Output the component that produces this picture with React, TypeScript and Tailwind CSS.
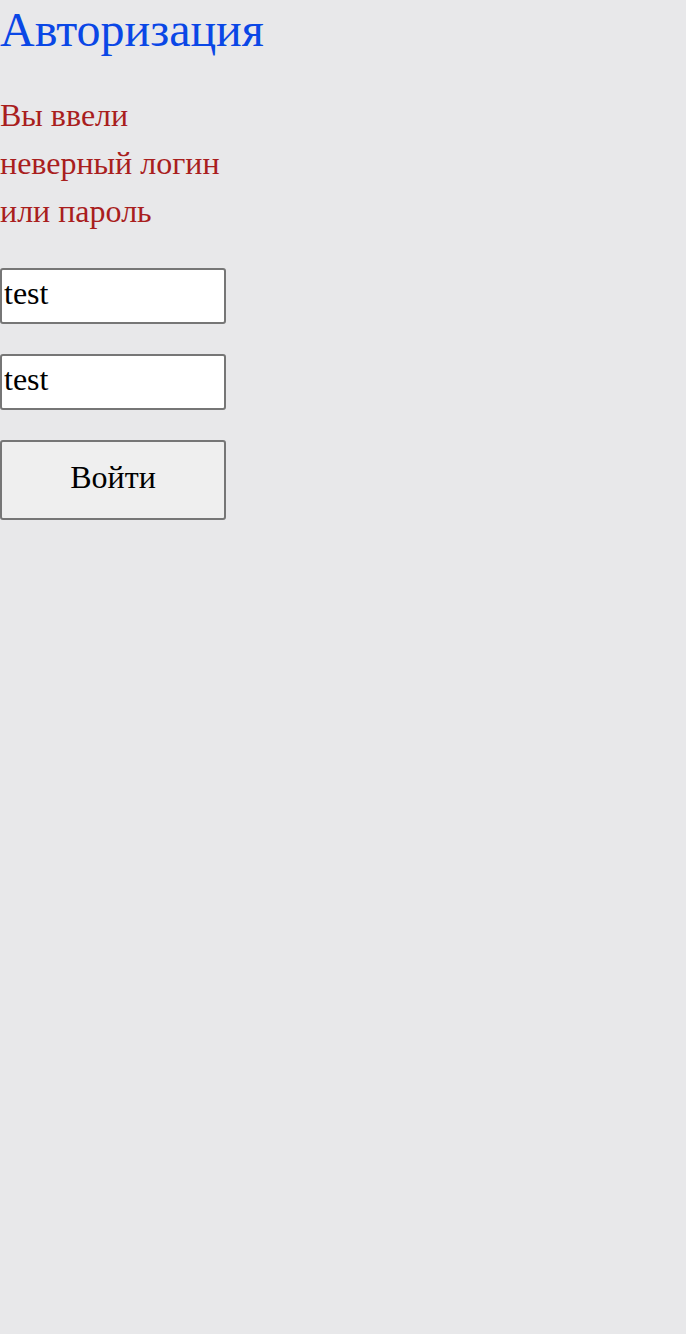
import React from 'react';

const App: React.FC = () => {
  return (
    <div className="min-h-screen w-full bg-[#e8e8ea] font-['Liberation_Serif',serif]">
      <div className="w-[226px] flex flex-col">
        <h1 className="text-[48px] leading-[60px] text-[#0a47e6] whitespace-nowrap">Авторизация</h1>

        <p className="mt-[31px] text-[32px] leading-[48px] text-[#a91e1e]">
          Вы ввели неверный логин или пароль
        </p>

        <input
          type="text"
          defaultValue="test"
          className="mt-[33px] h-[56px] w-[226px] bg-white border-2 border-[#767676] rounded-[3px] px-[2px] pb-[6px] text-[32px] text-black outline-none font-['Liberation_Serif',serif]"
        />
        <input
          type="text"
          defaultValue="test"
          className="mt-[30px] h-[56px] w-[226px] bg-white border-2 border-[#767676] rounded-[3px] px-[2px] pb-[6px] text-[32px] text-black outline-none font-['Liberation_Serif',serif]"
        />

        <button className="mt-[30px] h-[80px] w-[226px] bg-[#efefef] border-2 border-[#767676] rounded-[3px] pb-[6px] text-[32px] text-black font-['Liberation_Serif',serif]">
          Войти
        </button>
      </div>
    </div>
  );
};

export default App;
